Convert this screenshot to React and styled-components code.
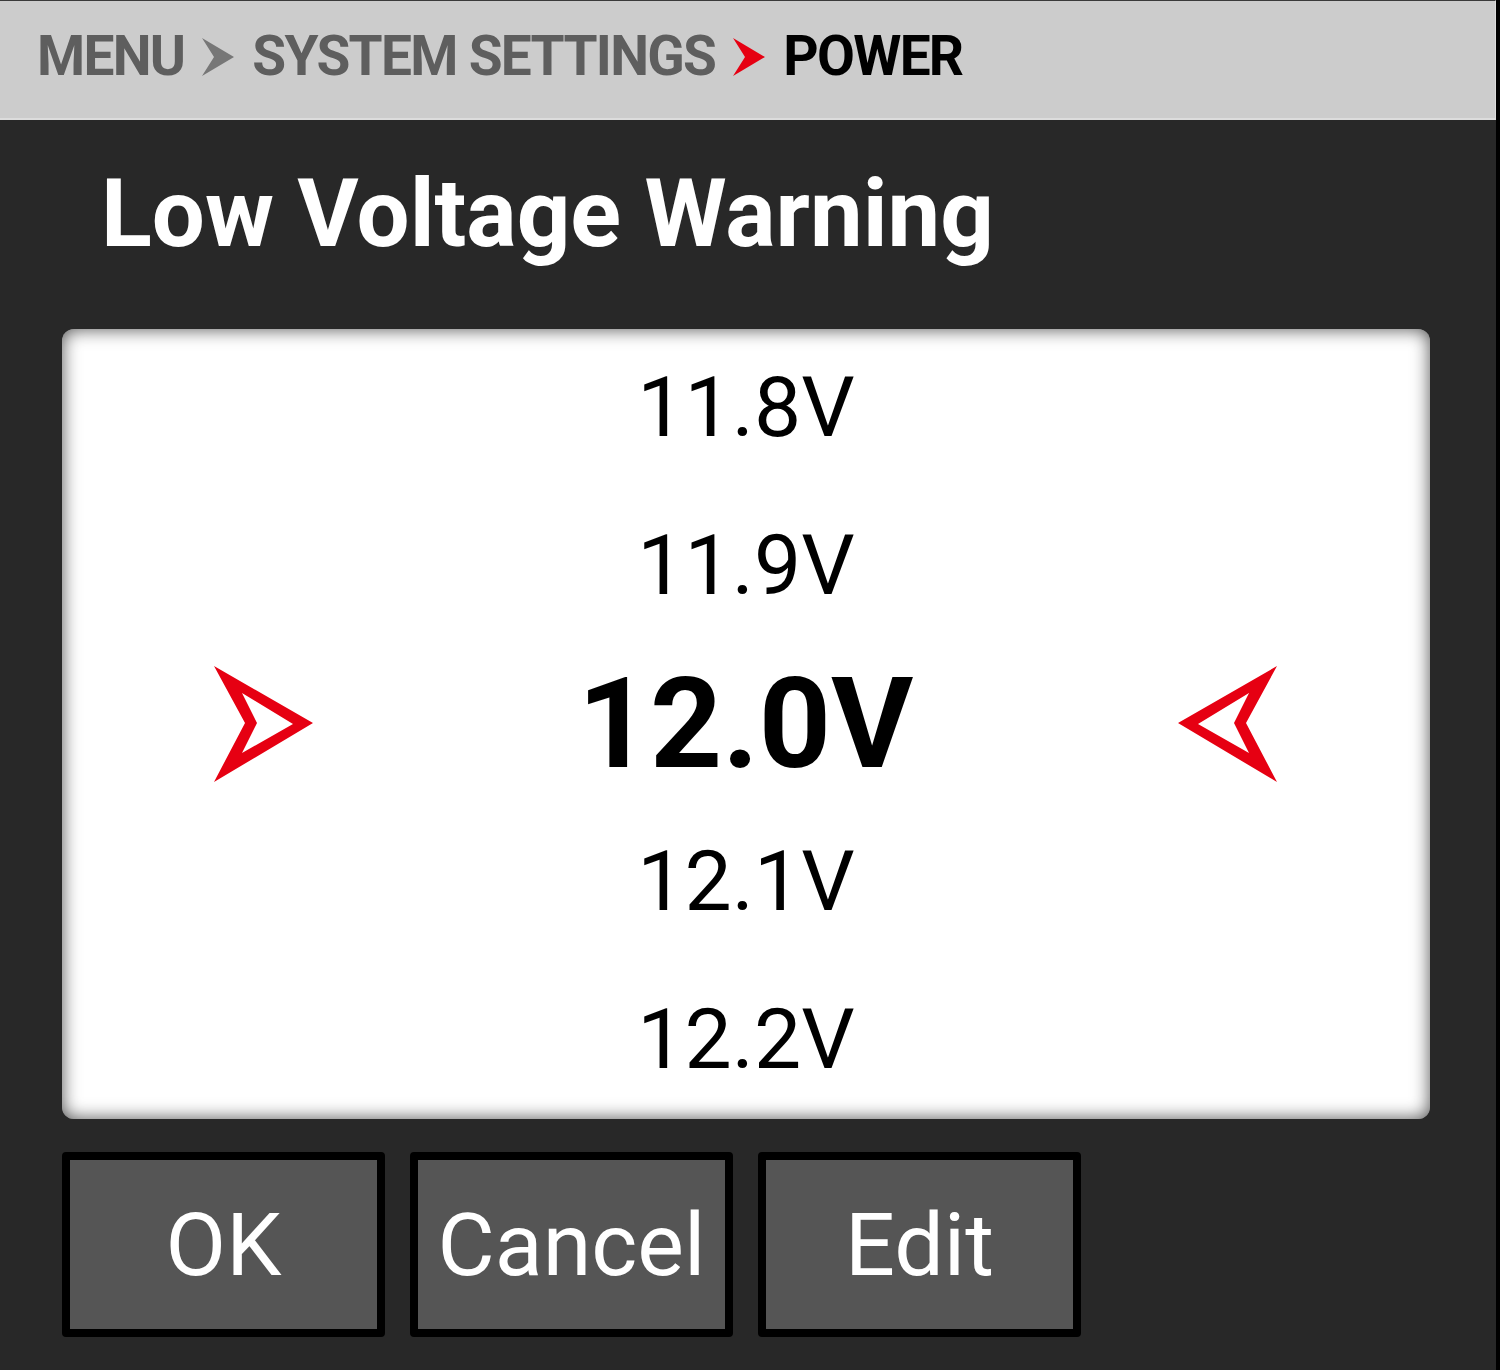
import React from 'react';
import styled, { createGlobalStyle } from 'styled-components';

const Global = createGlobalStyle`
html, body {
  margin:0;
  padding:0;
  background:#000;
}
body {
  font-family: Roboto, "Noto Sans", sans-serif;
}
`;

const Screen = styled.div`
width:1496px;
height:1370px;
background:#282828;
display:flex;
flex-direction:column;
`;

const Header = styled.div`
height:120px;
box-sizing:border-box;
background:#cccccc;
border-top:1px solid #3a3a3a;
border-bottom:2px solid #dcdcdc;
border-right:1px solid #dcdcdc;
display:flex;
align-items:center;
padding:0 0 6px 37px;
`;

const Crumbs = styled.div`
display:flex;
align-items:center;
gap:18px;
`;

const Crumb = styled.span`
font-family: Roboto, sans-serif;
font-weight:700;
font-size:55px;
letter-spacing:-1.7px;
line-height:1;
color:${(props)=> props.current ? '#000' : '#5e5e5e'};
`;

const Title = styled.h1`
margin:47px 0 0 101px;
font-family: Roboto, sans-serif;
font-weight:700;
font-size:94px;
line-height:1;
color:#fff;
`;

const Picker = styled.div`
margin:68px 0 0 62px;
width:1368px;
height:790px;
background:#fff;
border-radius:12px;
box-shadow: inset 0 0 18px rgba(0,0,0,0.7);
display:flex;
flex-direction:column;
`;

const Row = styled.div`
height:158px;
display:flex;
align-items:center;
justify-content:${(props)=> props.selected ? 'space-between' : 'center'};
padding:0 ${(props)=> props.selected ? '153px 0 152px' : '0'};
`;

const Value = styled.span`
font-family: Roboto, sans-serif;
font-weight:${(props)=> props.selected ? 700 : 400};
font-size:${(props)=> props.selected ? '126px' : '84px'};
line-height:158px;
color:#000;
`;

const Buttons = styled.div`
display:flex;
gap:25px;
margin:33px 0 0 62px;
`;

const Button = styled.button`
width:323px;
height:185px;
box-sizing:border-box;
background:#555555;
border:8px solid #000;
border-radius:4px;
color:#fff;
font-family: Roboto, sans-serif;
font-size:88px;
font-weight:400;
padding:0;
display:flex;
align-items:center;
justify-content:center;
`;

const Chevron = ({color}) => (
  <svg width="32" height="38" viewBox="0 0 32 38">
    <polygon points="0,0 32,19 0,38 12,19" fill={color}/>
  </svg>
);

const Dart = ({flip}) => (
  <svg width="100" height="116" viewBox="0 0 100 116" style={flip ? {transform:'scaleX(-1)'} : undefined}>
    <path
      fillRule="evenodd"
      fill="#e60012"
      d="M0,0 L99,57 L0,116 L31,57 Z M28,27 L79,58 L28,87 L43,57 Z"
    />
  </svg>
);

const values = ['11.8V', '11.9V', '12.0V', '12.1V', '12.2V'];

export default function App(){
  return <>
    <Global/>
    <Screen>
      <Header>
        <Crumbs>
          <Crumb>MENU</Crumb>
          <Chevron color="#777"/>
          <Crumb>SYSTEM SETTINGS</Crumb>
          <Chevron color="#e60012"/>
          <Crumb current>POWER</Crumb>
        </Crumbs>
      </Header>
      <Title>Low Voltage Warning</Title>
      <Picker>
        {values.map((v, i) => i === 2 ? (
          <Row selected key={v}>
            <Dart/>
            <Value selected>{v}</Value>
            <Dart flip/>
          </Row>
        ) : (
          <Row key={v}><Value>{v}</Value></Row>
        ))}
      </Picker>
      <Buttons>
        <Button>OK</Button>
        <Button>Cancel</Button>
        <Button>Edit</Button>
      </Buttons>
    </Screen>
  </>
}
